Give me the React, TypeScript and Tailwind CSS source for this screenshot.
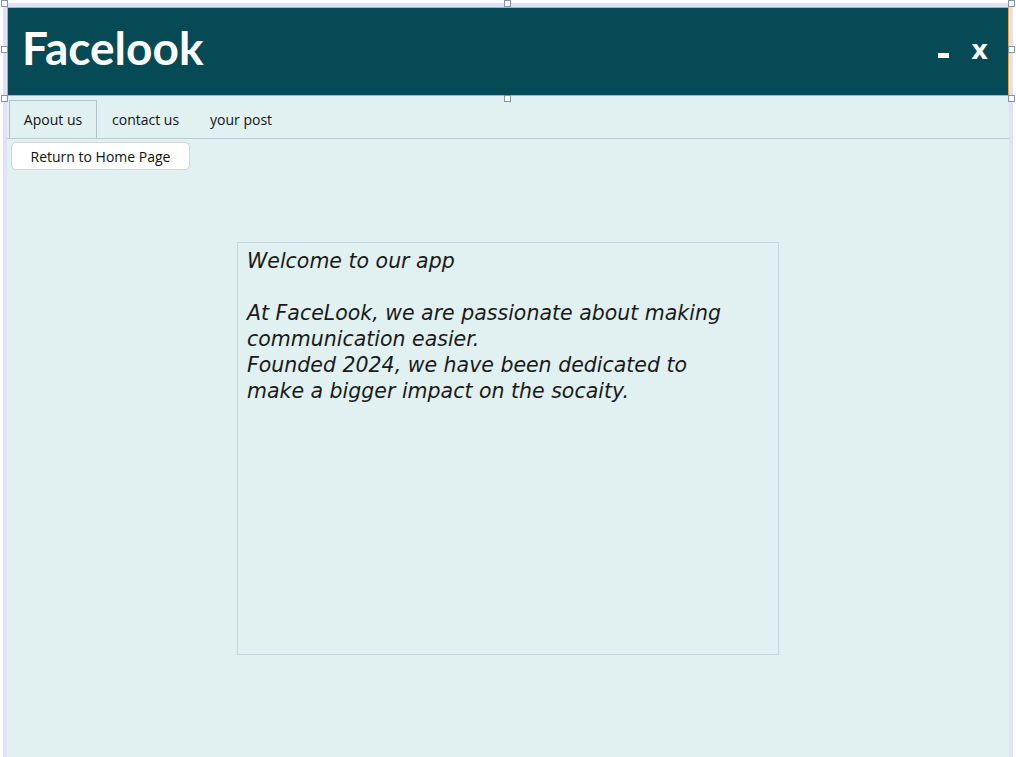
import React from "react";

function Handle({ className }: { className: string }) {
  return (
    <div
      className={
        "absolute w-[7px] h-[7px] border border-[#7d95ad] bg-white " + className
      }
    />
  );
}

export default function App() {
  return (
    <div className="w-[1016px] h-[757px] bg-white pt-[3px] pl-[3px] overflow-hidden relative">
      <div className="w-[1010px] h-[754px] bg-[#e0e0fb] pt-[4px] px-[4px]">
        <div className="w-[1002px] h-[750px] bg-[#e1f1f1] flex flex-col">
          {/* header */}
          <div className="h-[89px] bg-[#054a55] border border-[#f0a830] flex items-center justify-between pl-[14px] pr-[20px]">
            <span
              className="text-white font-bold text-[46px] leading-none mb-[8px]"
              style={{ fontFamily: 'Lato, sans-serif' }}
            >
              Facelook
            </span>
            <div className="flex items-center gap-[22px] text-white font-bold mb-[4px]">
              <span className="block w-[11px] h-[5px] bg-white mt-[12px]" />
              <span
                className="text-[26px] leading-none"
                style={{ fontFamily: '"DejaVu Sans", sans-serif' }}
              >
                x
              </span>
            </div>
          </div>
          {/* tabs */}
          <div
            className="flex items-end h-[43px] border-b border-[#bccbd0] pl-[2px] text-[14px] text-[#111]"
            style={{ fontFamily: '"Open Sans", sans-serif' }}
          >
            <div className="h-[38px] w-[88px] border border-b-0 border-[#b2c3c6] flex items-center justify-center">
              Apout us
            </div>
            <div className="h-[38px] px-[15px] flex items-center">contact us</div>
            <div className="h-[38px] px-[16px] flex items-center">your post</div>
          </div>
          <div className="pl-[4px] pt-[3px]">
            <button
              className="w-[179px] h-[28px] bg-white border border-[#cfd6d8] rounded-[5px] text-[14px] text-[#111]"
              style={{ fontFamily: '"Open Sans", sans-serif' }}
            >
              Return to Home Page
            </button>
          </div>
          <div className="pl-[230px] pt-[72px]">
            <div
              className="w-[542px] h-[413px] border border-[#c6d6d8] px-[9px] pt-[5px] text-[20.5px] leading-[26px] italic text-[#1a1a1a]"
              style={{ fontFamily: '"DejaVu Sans", sans-serif' }}
            >
              <div>Welcome to our app</div>
              <div>&nbsp;</div>
              <div>At FaceLook, we are passionate about making</div>
              <div>communication easier.</div>
              <div>Founded 2024, we have been dedicated to</div>
              <div>make a bigger impact on the socaity.</div>
            </div>
          </div>
        </div>
      </div>
      {/* designer grab handles */}
      <Handle className="left-[1px] top-0" />
      <Handle className="left-[504px] top-0" />
      <Handle className="left-[1008px] top-0" />
      <Handle className="left-[1px] top-[46px]" />
      <Handle className="left-[1008px] top-[46px]" />
      <Handle className="left-[1px] top-[95px]" />
      <Handle className="left-[504px] top-[95px]" />
      <Handle className="left-[1008px] top-[95px]" />
    </div>
  );
}
